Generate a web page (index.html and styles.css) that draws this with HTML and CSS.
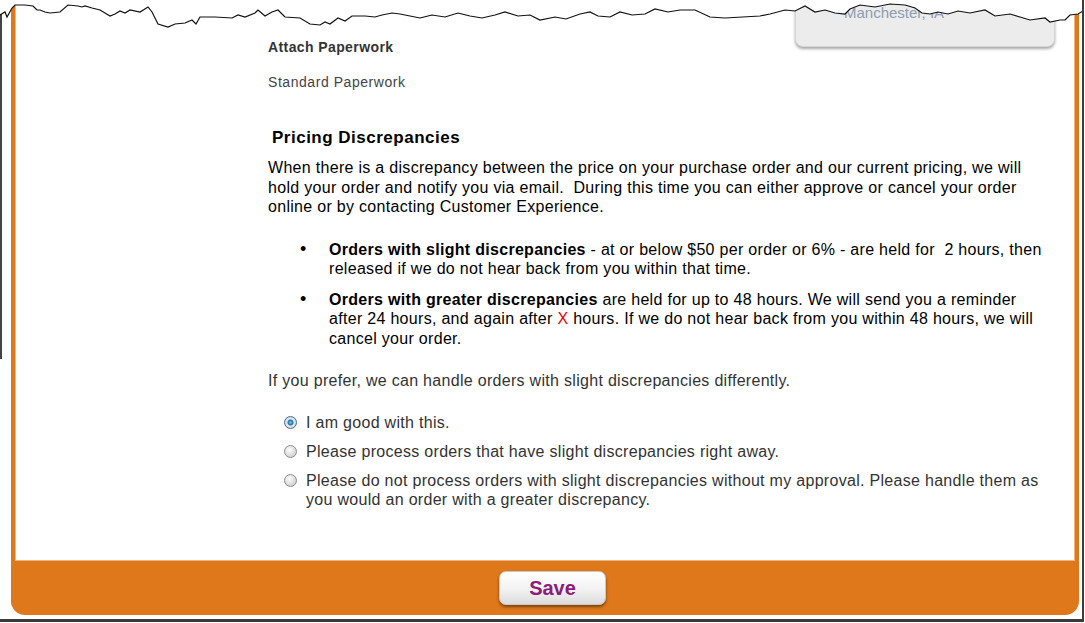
FILE: index.html
```html
<!DOCTYPE html>
<html lang="en">

<head>
    <meta charset="UTF-8">
    <title>Pricing Discrepancies</title>
    <link rel="stylesheet" href="styles.css">
</head>

<body>
    <div class="screen">
        <div class="panel">
            <div class="content">
                <div class="address-card">
                    <span>Manchester, IA</span>
                </div>

                <div class="paperwork">
                    <h3>Attach Paperwork</h3>
                    <p>Standard Paperwork</p>
                </div>

                <section class="pricing">
                    <h2>Pricing Discrepancies</h2>
                    <p>When there is a discrepancy between the price on your purchase order and our current pricing, we will
                        hold your order and notify you via email.&nbsp; During this time you can either approve or cancel your order
                        online or by contacting Customer Experience.</p>

                    <ul class="rules">
                        <li><b>Orders with slight discrepancies</b> - at or below $50 per order or 6% - are held for&nbsp; 2 hours, then
                            released if we do not hear back from you within that time.</li>
                        <li><b>Orders with greater discrepancies</b> are held for up to 48 hours. We will send you a reminder
                            after 24 hours, and again after <span class="red">X</span> hours. If we do not hear back from you within 48 hours, we will
                            cancel your order.</li>
                    </ul>

                    <p class="prefer">If you prefer, we can handle orders with slight discrepancies differently.</p>

                    <div class="choices">
                        <label class="choice">
                            <span class="radio checked"></span>
                            <span>I am good with this.</span>
                        </label>
                        <label class="choice">
                            <span class="radio"></span>
                            <span>Please process orders that have slight discrepancies right away.</span>
                        </label>
                        <label class="choice">
                            <span class="radio"></span>
                            <span>Please do not process orders with slight discrepancies without my approval. Please handle them as
                                you would an order with a greater discrepancy.</span>
                        </label>
                    </div>
                </section>
            </div>

            <div class="footer">
                <button class="save">Save</button>
            </div>
        </div>

        <!-- torn top edge of the capture -->
        <svg class="torn" width="1085" height="32" viewBox="0 0 1085 32">
            <polygon fill="#fff" points="0,0 1085,0 1085,11 1083,11 1078,14 1070,15 1065,20 1060,20 1050,22 1045,18 1030,20 1020,17 1010,14 995,16 985,10 970,13 958,11 948,14 938,12 930,14 922,13 915,8 905,5 890,4 875,7 860,5 850,9 845,14 835,13 825,10 815,12 805,6 795,11 785,10 770,14 760,16 725,18 710,17 695,10 680,10 668,12 655,9 645,14 632,15 620,12 610,17 598,16 590,12 580,14 566,19 555,17 540,20 530,15 518,16 505,12 495,15 482,18 470,16 458,13 445,17 432,15 420,18 410,16 400,14 392,13 382,15 375,17 365,16 352,16 345,21 338,18 330,24 325,22 320,25 310,24 300,18 285,17 278,10 272,12 265,16 258,10 255,13 245,17 238,15 232,18 215,17 200,17 196,24 192,20 185,23 175,24 168,27 158,24 152,12 148,7 140,12 130,10 125,13 120,11 115,14 110,16 105,13 100,10 92,8 85,6 82,7 78,6 68,5 60,12 50,13 45,12 40,10 37,10 33,6 25,5 15,5 12,8 7,17 5,12 0,15" />
            <polyline fill="none" stroke="#111" stroke-width="1.2" points="0,15 5,12 7,17 12,8 15,5 25,5 33,6 37,10 40,10 45,12 50,13 60,12 68,5 78,6 82,7 85,6 92,8 100,10 105,13 110,16 115,14 120,11 125,13 130,10 140,12 148,7 152,12 158,24 168,27 175,24 185,23 192,20 196,24 200,17 215,17 232,18 238,15 245,17 255,13 258,10 265,16 272,12 278,10 285,17 300,18 310,24 320,25 325,22 330,24 338,18 345,21 352,16 365,16 375,17 382,15 392,13 400,14 410,16 420,18 432,15 445,17 458,13 470,16 482,18 495,15 505,12 518,16 530,15 540,20 555,17 566,19 580,14 590,12 598,16 610,17 620,12 632,15 645,14 655,9 668,12 680,10 695,10 710,17 725,18 760,16 770,14 785,10 795,11 805,6 815,12 825,10 835,13 845,14 850,9 860,5 875,7 890,4 905,5 915,8 922,13 930,14 938,12 948,14 958,11 970,13 985,10 995,16 1010,14 1020,17 1030,20 1045,18 1050,22 1060,20 1065,20 1070,15 1078,14 1083,11 1085,11" />
        </svg>
    </div>
</body>

</html>
```

FILE: styles.css
```css
body {
    margin: 0;
    background: #fff;
    font-family: 'Liberation Sans', Arial, sans-serif;
}

.screen {
    position: relative;
    width: 1082px;
    height: 619px;
    border-right: 2px solid #3c3c3c;
    border-bottom: 3px solid #3a3a3a;
    background: #fff;
    overflow: hidden;
}

/* left shadow line that stops half way down */
.screen::before {
    content: "";
    position: absolute;
    left: 0;
    top: 0;
    width: 2px;
    height: 359px;
    background: #444;
}

.panel {
    margin-left: 11px;
    width: 1068px;
    height: 615px;
    display: flex;
    flex-direction: column;
}

.content {
    flex: 1;
    position: relative;
    border-left: 4px solid #df781b;
    border-right: 4px solid #df781b;
    box-shadow: inset 1px 0 0 #f5b27a, inset -1px 0 0 #f5b27a;
    padding: 39px 0 0 253px;
}

.address-card {
    position: absolute;
    left: 780px;
    top: -10px;
    width: 258px;
    height: 55px;
    background: #ececec;
    border: 1px solid #d6d6d6;
    border-radius: 0 0 8px 8px;
    box-shadow: 0 2px 3px rgba(0, 0, 0, 0.35);
    color: #8d9db2;
    font-size: 15px;
}

.address-card span {
    display: block;
    padding: 13px 0 0 48px;
}

.paperwork h3 {
    margin: 0;
    font-size: 14px;
    letter-spacing: 0.4px;
    font-weight: bold;
    color: #333;
}

.paperwork p {
    margin: 19px 0 0;
    font-size: 14px;
    letter-spacing: 0.55px;
    color: #444;
}

.pricing {
    margin-top: 38px;
    width: 777px;
    color: #000;
    font-size: 16px;
    letter-spacing: 0.3px;
    line-height: 19.5px;
}

.pricing h2 {
    margin: 0 0 10px 4px;
    font-size: 17px;
    letter-spacing: 0.5px;
    line-height: 20px;
}

.pricing p {
    margin: 0;
}

.rules {
    margin: 23px 0 0;
    padding-left: 61px;
    list-style: none;
}

.rules li {
    margin-bottom: 11px;
}

.rules li::before {
    content: "\2022";
    display: inline-block;
    width: 29px;
    margin-left: -29px;
    font-size: 18px;
}

.red {
    color: #e00;
}

.pricing .prefer {
    margin-top: 23px;
    color: #333;
}

.choices {
    margin-top: 22px;
    padding-left: 16px;
    color: #333;
}

.choice {
    display: flex;
    gap: 9px;
    margin-bottom: 9.5px;
}

.radio {
    flex: none;
    width: 13px;
    height: 13px;
    margin-top: 3px;
    border: 1px solid #8f8f8f;
    border-radius: 50%;
    box-sizing: border-box;
    background: radial-gradient(circle at 40% 35%, #fdfdfd, #d4d4d4 70%, #c2c2c2);
}

.radio.checked {
    border-color: #3d6f9e;
    background: radial-gradient(circle, #7fcaf2 0, #1b6fb0 2.5px, #eaeaea 3.5px, #d0d0d0 6px);
}

.footer {
    height: 54px;
    background: #df781b;
    border-radius: 0 0 14px 14px;
    display: flex;
    justify-content: center;
    align-items: center;
    box-shadow: 0 -1px 0 #f0b480;
}

.save {
    width: 107px;
    height: 34px;
    margin-left: 15px;
    border: 1px solid #c9c9c9;
    border-radius: 7px;
    background: linear-gradient(#ffffff, #f2f2f2 55%, #dcdcdc);
    box-shadow: 0 2px 3px rgba(60, 30, 0, 0.6);
    color: #8b1c7c;
    font-family: 'Liberation Sans', sans-serif;
    font-size: 20px;
    font-weight: bold;
}

.torn {
    position: absolute;
    left: 0;
    top: 0;
}
```
